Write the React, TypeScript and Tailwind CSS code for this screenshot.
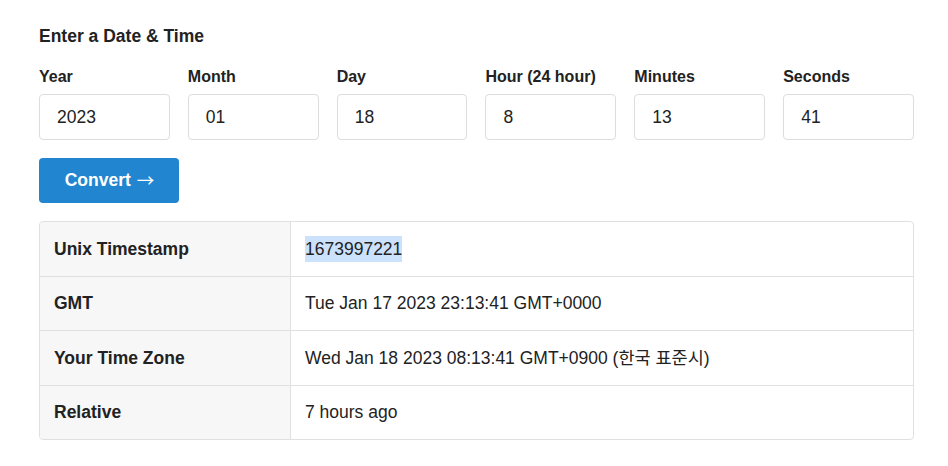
const fields = [
  { label: "Year", value: "2023" },
  { label: "Month", value: "01" },
  { label: "Day", value: "18" },
  { label: "Hour (24 hour)", value: "8" },
  { label: "Minutes", value: "13" },
  { label: "Seconds", value: "41" },
];

const rows = [
  { label: "GMT", value: "Tue Jan 17 2023 23:13:41 GMT+0000" },
  { label: "Your Time Zone", value: "Wed Jan 18 2023 08:13:41 GMT+0900 (한국 표준시)" },
  { label: "Relative", value: "7 hours ago" },
];

export default function App() {
  return (
    <div
      className="min-h-[466px] bg-white text-[#222] pl-[39px] pr-[34px] pt-[25px]"
      style={{ fontFamily: '"Liberation Sans", Arial, "Noto Sans CJK KR", sans-serif' }}
    >
      <h2 className="text-[17.5px] font-bold leading-[22px]">Enter a Date &amp; Time</h2>

      <div className="mt-[20px] grid grid-cols-6 gap-x-[18px]">
        {fields.map((f) => (
          <div key={f.label} className="flex flex-col">
            <label className="text-[16px] font-bold leading-[20px]">{f.label}</label>
            <input
              readOnly
              value={f.value}
              className="mt-[7px] h-[46px] w-full rounded-[4px] border border-[#dddddd] bg-white px-[17px] text-[17.5px] text-[#222] outline-none"
            />
          </div>
        ))}
      </div>

      <button className="mt-[18px] flex h-[45px] w-[140px] items-center justify-center gap-[6px] rounded-[4px] bg-[#2185d0] pl-[1px] text-[17.5px] font-bold text-white">
        Convert
        <span className="font-normal" style={{ fontFamily: '"Noto Sans CJK KR", sans-serif' }}>
          →
        </span>
      </button>

      <div className="mt-[18px] overflow-hidden rounded-[4px] border border-[#e0e0e0]">
        <div className="flex h-[53.5px] text-[17.5px]">
          <div className="flex w-[251px] items-center border-r border-[#e0e0e0] bg-[#f7f7f7] px-[14px] font-bold">
            Unix Timestamp
          </div>
          <div className="flex flex-1 items-center px-[14px]">
            <span className="bg-[#cce1fb]">1673997221</span>
          </div>
        </div>
        {rows.map((r) => (
          <div key={r.label} className="flex h-[54.5px] border-t border-[#e0e0e0] text-[17.5px]">
            <div className="flex w-[251px] items-center border-r border-[#e0e0e0] bg-[#f7f7f7] px-[14px] font-bold">
              {r.label}
            </div>
            <div className="flex flex-1 items-center px-[14px]">{r.value}</div>
          </div>
        ))}
      </div>
    </div>
  );
}
